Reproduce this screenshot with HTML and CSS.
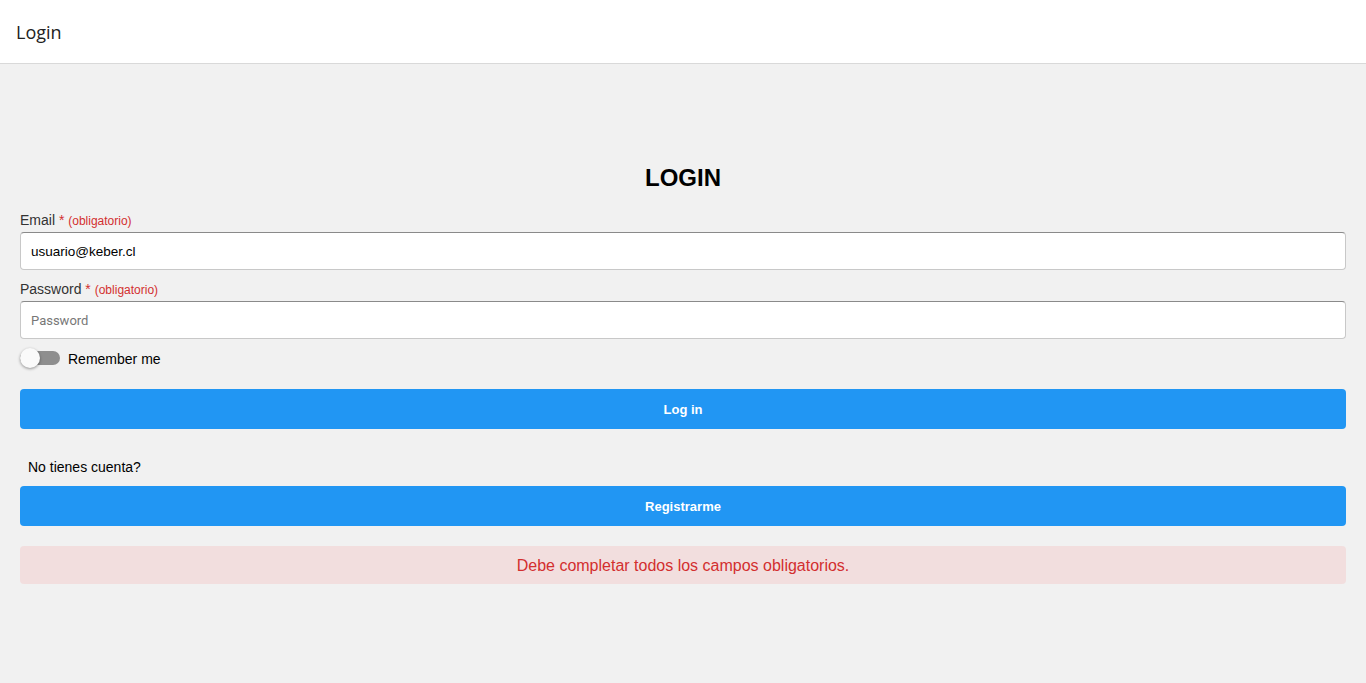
FILE: index.html
```html
<!DOCTYPE html>
<html lang="es">
<head>
<meta charset="utf-8">
<title>Login</title>
<link rel="stylesheet" href="styles.css">
</head>
<body>
<header class="topbar"><span class="topbar-title">Login</span></header>
<main class="page">
  <h1 class="title">LOGIN</h1>
  <form class="form">
    <label class="label">Email <span class="req">*</span> <span class="req-small">(obligatorio)</span></label>
    <input class="input" type="text" value="usuario@keber.cl">
    <label class="label label-2">Password <span class="req">*</span> <span class="req-small">(obligatorio)</span></label>
    <input class="input" type="password" placeholder="Password">
    <div class="remember">
      <span class="toggle"><span class="track"></span><span class="knob"></span></span>
      <span class="remember-text">Remember me</span>
    </div>
    <button type="button" class="btn">Log in</button>
    <p class="noaccount">No tienes cuenta?</p>
    <button type="button" class="btn">Registrarme</button>
    <div class="alert">Debe completar todos los campos obligatorios.</div>
  </form>
</main>
</body>
</html>
```
FILE: styles.css
```css
html, body { margin: 0; padding: 0; }
body {
  background: #f1f1f1;
  font-family: Arial, "Liberation Sans", sans-serif;
  height: 683px;
  overflow: hidden;
}
.topbar {
  height: 63px;
  background: #fff;
  border-bottom: 1px solid #d9d9d9;
  display: flex;
  align-items: center;
  padding-left: 16px;
}
.topbar-title {
  font-family: "Open Sans", "Noto Sans", sans-serif;
  font-size: 18px;
  color: #222;
}
.page { padding: 0 20px; }
.title {
  margin: 100px 0 0;
  height: 28px;
  line-height: 28px;
  text-align: center;
  font-size: 24px;
  font-weight: bold;
  color: #000;
}
.form { display: flex; flex-direction: column; margin-top: 20px; }
.label {
  font-size: 14px;
  color: #333;
  line-height: 16px;
  height: 16px;
  margin-bottom: 4px;
}
.label-2 { margin-top: 11px; }
.req { color: #d32f2f; }
.req-small { color: #d32f2f; font-size: 12px; }
.input {
  box-sizing: border-box;
  height: 38px;
  margin: 0;
  border: 1px solid #c8c8c8;
  border-top-color: #8a8a8a;
  border-radius: 4px;
  background: #fff;
  padding: 0 10px;
  font-family: Arial, "Liberation Sans", sans-serif;
  font-size: 13.5px;
  color: #000;
  outline: none;
}
.input::placeholder { color: #777; font-family: Roboto, Arial, sans-serif; font-size: 13px; }
.remember {
  display: flex;
  align-items: center;
  margin-top: 9px;
  height: 20px;
}
.toggle { position: relative; width: 40px; height: 20px; display: inline-block; }
.track {
  position: absolute;
  left: 0; top: 3px;
  width: 40px; height: 14px;
  border-radius: 7px;
  background: #8e8e8e;
}
.knob {
  position: absolute;
  left: 0; top: 0;
  width: 20px; height: 20px;
  border-radius: 50%;
  background: #fafafa;
  box-shadow: 0 1px 3px rgba(0,0,0,0.4);
}
.remember-text { margin-left: 8px; font-size: 14px; color: #000; position: relative; top: 1px; }
.btn {
  height: 40px;
  margin: 0;
  border: none;
  border-radius: 4px;
  background: #2196f3;
  color: #fff;
  font-family: Arial, "Liberation Sans", sans-serif;
  font-weight: bold;
  font-size: 13px;
}
.remember + .btn { margin-top: 21px; }
.noaccount {
  margin: 30px 0 10px 8px;
  font-size: 14px;
  line-height: 17px;
  color: #000;
}
.alert {
  margin-top: 20px;
  height: 38px;
  border-radius: 4px;
  background: #f2dede;
  color: #d32f2f;
  font-size: 16px;
  display: flex;
  align-items: center;
  justify-content: center;
  padding-top: 1px;
  box-sizing: border-box;
}
```
